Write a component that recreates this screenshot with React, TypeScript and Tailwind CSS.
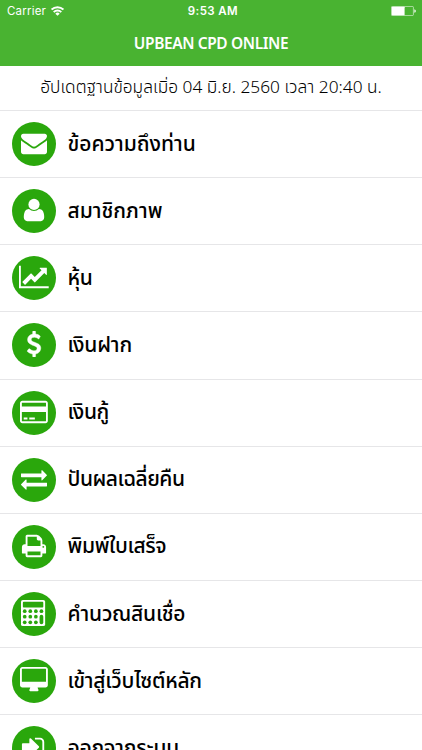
import React from 'react';

type IconProps = { w?: number; children: React.ReactNode };

function Icon({ w = 1792, children }: IconProps) {
  return (
    <svg
      viewBox={`0 0 ${w} 1792`}
      width={(w / 1792) * 26}
      height={26}
      fill="currentColor"
      fillRule="evenodd"
      className="shrink-0"
    >
      {children}
    </svg>
  );
}

const calcKeys = [
  [256, 768], [640, 768], [1024, 768], [1408, 768],
  [256, 1152], [640, 1152], [1024, 1152],
  [256, 1536], [640, 1536], [1024, 1536],
];

const items = [
  {
    label: 'ข้อความถึงท่าน',
    className: 'tracking-normal',
    icon: (
      <Icon>
        <path d="M1792 710v794q0 66-47 113t-113 47h-1472q-66 0-113-47t-47-113v-794q44 49 101 87 362 246 497 345 57 42 92.5 65.5t94.5 48 110 24.5h2q51 0 110-24.5t94.5-48 92.5-65.5q170-123 498-345 57-39 100-87zm0-294q0 79-49 151t-122 123q-376 261-468 325-10 7-42.5 31t-54 38.5-52 32.5-57.5 27-50 9h-2q-23 0-50-9t-57.5-27-52-32.5-54-38.5-42.5-31q-91-64-262-182.5t-205-142.5q-62-42-117-115.5t-55-136.5q0-78 41.5-130t118.5-52h1472q65 0 112.5 47t47.5 113z" />
      </Icon>
    ),
  },
  {
    label: 'สมาชิกภาพ',
    className: 'tracking-normal',
    icon: (
      <Icon>
        <path transform="translate(-90 0) scale(1.1 1)" d="M1536 1399q0 109-62.5 187t-150.5 78h-854q-88 0-150.5-78t-62.5-187q0-85 8.5-160.5t31.5-152 58.5-131 94-89 134.5-34.5q131 128 313 128t313-128q76 0 134.5 34.5t94 89 58.5 131 31.5 152 8.5 160.5z" />
        <circle cx={896} cy={512} r={384} />
      </Icon>
    ),
  },
  {
    label: 'หุ้น',
    className: 'tracking-[-0.4px]',
    icon: (
      <Icon w={2048}>
        <path d="M2048 1536v128h-2048v-1536h128v1408h1920zm-128-1248v435q0 21-19.5 29.5t-35.5-7.5l-121-121-633 633q-10 10-23 10t-23-10l-233-233-416 416-192-192 585-585q10-10 23-10t23 10l233 233 464-464-121-121q-16-16-7.5-35.5t29.5-19.5h435q14 0 23 9t9 23z" />
      </Icon>
    ),
  },
  {
    label: 'เงินฝาก',
    className: 'tracking-[-0.2px]',
    icon: (
      <Icon>
        <path stroke="currentColor" strokeWidth={30} d="M1362 1185q0 153-99.5 263.5t-258.5 136.5v175q0 14-9 23t-23 9h-135q-13 0-22.5-9.5t-9.5-22.5v-175q-66-9-127.5-31t-101.5-44.5-74-48-46.5-37.5-17.5-18q-17-21-2-41l103-135q7-10 23-12 15-2 24 9l2 2q113 99 243 125 37 8 74 8 81 0 142.5-43t61.5-122q0-28-15-53t-33.5-42-58.5-37.5-66-32-80-32.5q-39-16-61.5-25t-61.5-26.5-62.5-31-56.5-35.5-53.5-42.5-43.5-49-35.5-58-21-66.5-8.5-78q0-138 98-242t255-134v-180q0-13 9.5-22.5t22.5-9.5h135q14 0 23 9t9 23v176q57 6 110.5 23t87 33.5 63.5 37.5 39 29 15 14q17 18 5 38l-81 146q-8 15-23 16-14 3-27-7-3-3-14.5-12t-39-26.5-58.5-32-74.5-26-85.5-11.5q-95 0-155 43t-60 111q0 26 8.5 48t29.5 41.5 39.5 33 56 31 60.5 27 70 27.5q53 20 81 31.5t76 35 75.5 42.5 62 50 53 63.5 31.5 76.5 13 94z" />
      </Icon>
    ),
  },
  {
    label: 'เงินกู้',
    className: 'tracking-[-0.4px]',
    icon: (
      <Icon w={1920}>
        <path d="M1760 128q66 0 113 47t47 113v1216q0 66-47 113t-113 47h-1600q-66 0-113-47t-47-113v-1216q0-66 47-113t113-47h1600zm-1600 128q-13 0-22.5 9.5t-9.5 22.5v224h1664v-224q0-13-9.5-22.5t-22.5-9.5h-1600zm1600 1280q13 0 22.5-9.5t9.5-22.5v-608h-1664v608q0 13 9.5 22.5t22.5 9.5h1600z" />
        <path d="M256 1408v-128h256v128zM640 1408v-128h384v128z" />
      </Icon>
    ),
  },
  {
    label: 'ปันผลเฉลี่ยคืน',
    className: 'tracking-[-0.5px]',
    icon: (
      <Icon>
        <path d="M1792 1184v192q0 13-9.5 22.5t-22.5 9.5h-1376v192q0 13-9.5 22.5t-22.5 9.5q-12 0-24-10l-319-320q-9-9-9-22 0-14 9-23l320-320q9-9 23-9 13 0 22.5 9.5t9.5 22.5v192h1376q13 0 22.5 9.5t9.5 22.5zm0-544q0 14-9 23l-320 320q-9 9-23 9-13 0-22.5-9.5t-9.5-22.5v-192h-1376q-13 0-22.5-9.5t-9.5-22.5v-192q0-13 9.5-22.5t22.5-9.5h1376v-192q0-14 9-23t23-9q12 0 24 10l319 319q9 9 9 23z" />
      </Icon>
    ),
  },
  {
    label: 'พิมพ์ใบเสร็จ',
    className: 'tracking-[-0.35px]',
    icon: (
      <Icon>
        <path d="M448 1536h896v-256h-896v256zm0-640h896v-384h-160q-40 0-68-28t-28-68v-160h-640v640zm1152 64q0-26-19-45t-45-19-45 19-19 45 19 45 45 19 45-19 19-45zm128 0v416q0 13-9.5 22.5t-22.5 9.5h-224v160q0 40-28 68t-68 28h-960q-40 0-68-28t-28-68v-160h-224q-13 0-22.5-9.5t-9.5-22.5v-416q0-79 56.5-135.5t135.5-56.5h64v-544q0-40 28-68t68-28h672q40 0 88 20t76 48l152 152q28 28 48 76t20 88v256h64q79 0 135.5 56.5t56.5 135.5z" />
      </Icon>
    ),
  },
  {
    label: 'คำนวณสินเชื่อ',
    className: 'tracking-[-0.25px]',
    icon: (
      <Icon>
        <rect x={0} y={0} width={1664} height={1792} rx={128} />
        <rect x={128} y={128} width={1408} height={384} rx={60} fill="#2aa70c" />
        {calcKeys.map(([x, y]) => (
          <circle key={`${x}-${y}`} cx={x} cy={y} r={128} fill="#2aa70c" />
        ))}
        <rect x={1280} y={1024} width={256} height={640} rx={128} fill="#2aa70c" />
      </Icon>
    ),
  },
  {
    label: 'เข้าสู่เว็บไซต์หลัก',
    className: 'tracking-[-0.25px]',
    icon: (
      <Icon w={1920}>
        <path d="M1792 992v-832q0-13-9.5-22.5t-22.5-9.5h-1600q-13 0-22.5 9.5t-9.5 22.5v832q0 13 9.5 22.5t22.5 9.5h1600q13 0 22.5-9.5t9.5-22.5zm128-832v1088q0 66-47 113t-113 47h-544q0 37 16 77.5t32 71 16 43.5q0 26-19 45t-45 19h-512q-26 0-45-19t-19-45q0-14 16-44t32-70 16-78h-544q-66 0-113-47t-47-113v-1088q0-66 47-113t113-47h1600q66 0 113 47t47 113z" />
      </Icon>
    ),
  },
  {
    label: 'ออกจากระบบ',
    className: 'tracking-[-0.2px]',
    icon: (
      <Icon>
        <path transform="translate(-64 0)" d="M1312 896q0 26-19 45l-544 544q-19 19-45 19t-45-19-19-45v-288h-448q-26 0-45-19t-19-45v-384q0-26 19-45t45-19h448v-288q0-26 19-45t45-19 45 19l544 544q19 19 19 45zm352-352v704q0 119-84.5 203.5t-203.5 84.5h-320q-13 0-22.5-9.5t-9.5-22.5q0-4-1-20t-.5-26.5 3-23.5 10-19.5 20.5-6.5h320q66 0 113-47t47-113v-704q0-66-47-113t-113-47h-312l-11.5-1-11.5-3-8-5.5-7-9-2-13.5q0-4-1-20t-.5-26.5 3-23.5 10-19.5 20.5-6.5h320q119 0 203.5 84.5t84.5 203.5z" />
      </Icon>
    ),
  },
];

function StatusBar() {
  return (
    <div className="grid grid-cols-3 items-center h-[22px] pl-[7px] pr-[6px] font-['Inter','Liberation_Sans',sans-serif] text-[11.5px] leading-none">
      <div className="flex items-center gap-[5px]">
        <span className="pt-px tracking-[0.2px]">Carrier</span>
        <svg width="13" height="10" viewBox="0 0 13 10" fill="none" stroke="currentColor" strokeWidth="1.9">
          <path d="M0.6 3.6a8.4 8.4 0 0 1 11.8 0" />
          <path d="M2.7 6.1a5.4 5.4 0 0 1 7.6 0" />
          <path d="M6.5 9.8L4.3 7.7a3 3 0 0 1 4.4 0z" fill="currentColor" stroke="none" />
        </svg>
      </div>
      <span className="pt-px pl-[3px] text-center font-semibold tracking-[0.4px] whitespace-nowrap">9:53 AM</span>
      <svg className="justify-self-end" width="25" height="10" viewBox="0 0 25 10">
        <rect x="0.4" y="0.4" width="22" height="9.2" rx="1" fill="none" stroke="#fff" strokeWidth="0.7" opacity="0.8" />
        <rect x="0.8" y="0.8" width="12.8" height="8.4" rx="0.5" fill="#fff" />
        <path d="M23.4 3.2q1.4 0.4 1.4 1.8t-1.4 1.8z" fill="#fff" />
      </svg>
    </div>
  );
}

export default function App() {
  return (
    <div className="w-full h-[750px] overflow-hidden bg-white text-black font-['Noto_Sans_Thai','Noto_Sans',sans-serif]">
      <header className="h-[66px] bg-[#49b331] text-white">
        <StatusBar />
        <h1 className="h-[44px] text-center text-[15.5px] leading-[43px] font-semibold tracking-[-0.4px] font-['Noto_Sans',sans-serif]">
          UPBEAN CPD ONLINE
        </h1>
      </header>
      <p className="h-[45px] border-b border-[#e6e6e8] text-center text-[17.3px] leading-[45px] font-[340] whitespace-nowrap">
        อัปเดตฐานข้อมูลเมิ่อ 04 มิ.ย. 2560 เวลา 20:40 น.
      </p>
      <ul>
        {items.map((item) => (
          <li key={item.label} className="flex items-center gap-3 h-[67.15px] pl-3 border-b border-[#e6e6e8]">
            <span className="flex items-center justify-center w-11 h-11 pb-[2px] shrink-0 rounded-full bg-[#2aa70c] text-white">
              {item.icon}
            </span>
            <span className={`-ml-[0.5px] text-[21px] leading-none font-medium whitespace-nowrap ${item.className}`}>
              {item.label}
            </span>
          </li>
        ))}
      </ul>
    </div>
  );
}
